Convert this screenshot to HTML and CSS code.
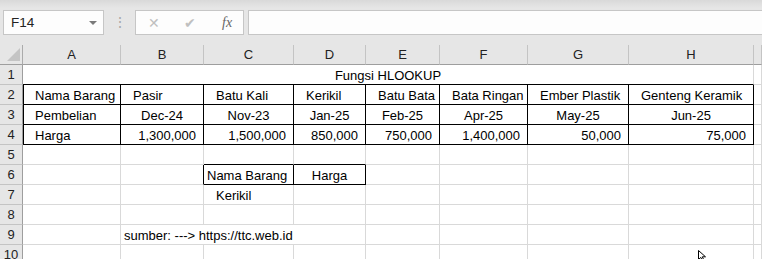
FILE: index.html
```html
<!DOCTYPE html>
<html>
<head>
  <title>Fungsi HLOOKUP</title>
  <link rel="stylesheet" href="styles.css">
</head>
<body>
  <div class="bar">
    <div class="namebox">
      <span>F14</span>
      <span class="drop"></span>
    </div>
    <div class="dots">&#8942;</div>
    <div class="fbtns">
      <span class="fb x">&#10005;</span>
      <span class="fb ok">&#10004;</span>
      <span class="fb fx">fx</span>
    </div>
    <div class="finput"></div>
  </div>

  <div class="sheet">
    <!-- column headers -->
    <div class="corner"><span class="tri"></span></div>
    <div class="colh">A</div>
    <div class="colh">B</div>
    <div class="colh">C</div>
    <div class="colh">D</div>
    <div class="colh">E</div>
    <div class="colh">F</div>
    <div class="colh">G</div>
    <div class="colh">H</div>
    <div class="colh"></div>

    <!-- row 1 -->
    <div class="rowh">1</div>
    <div class="cell merged kb center">Fungsi HLOOKUP</div>
    <div class="cell"></div>

    <!-- row 2 -->
    <div class="rowh">2</div>
    <div class="cell kr kb kl ind">Nama Barang</div>
    <div class="cell kr kb ind">Pasir</div>
    <div class="cell kr kb ind">Batu Kali</div>
    <div class="cell kr kb ind">Kerikil</div>
    <div class="cell kr kb ind">Batu Bata</div>
    <div class="cell kr kb ind">Bata Ringan</div>
    <div class="cell kr kb ind">Ember Plastik</div>
    <div class="cell kr kb ind">Genteng Keramik</div>
    <div class="cell"></div>

    <!-- row 3 -->
    <div class="rowh">3</div>
    <div class="cell kr kb kl ind">Pembelian</div>
    <div class="cell kr kb center">Dec-24</div>
    <div class="cell kr kb center">Nov-23</div>
    <div class="cell kr kb center">Jan-25</div>
    <div class="cell kr kb center">Feb-25</div>
    <div class="cell kr kb center">Apr-25</div>
    <div class="cell kr kb center">May-25</div>
    <div class="cell kr kb center">Jun-25</div>
    <div class="cell"></div>

    <!-- row 4 -->
    <div class="rowh">4</div>
    <div class="cell kr kb kl ind">Harga</div>
    <div class="cell kr kb num">1,300,000</div>
    <div class="cell kr kb num">1,500,000</div>
    <div class="cell kr kb num">850,000</div>
    <div class="cell kr kb num">750,000</div>
    <div class="cell kr kb num">1,400,000</div>
    <div class="cell kr kb num">50,000</div>
    <div class="cell kr kb num">75,000</div>
    <div class="cell"></div>

    <!-- row 5 -->
    <div class="rowh">5</div>
    <div class="cell"></div>
    <div class="cell"></div>
    <div class="cell kb"></div>
    <div class="cell kb"></div>
    <div class="cell"></div>
    <div class="cell"></div>
    <div class="cell"></div>
    <div class="cell"></div>
    <div class="cell"></div>

    <!-- row 6 -->
    <div class="rowh">6</div>
    <div class="cell"></div>
    <div class="cell kr"></div>
    <div class="cell kr kb small">Nama Barang</div>
    <div class="cell kr kb center">Harga</div>
    <div class="cell"></div>
    <div class="cell"></div>
    <div class="cell"></div>
    <div class="cell"></div>
    <div class="cell"></div>

    <!-- row 7 -->
    <div class="rowh">7</div>
    <div class="cell"></div>
    <div class="cell"></div>
    <div class="cell ind">Kerikil</div>
    <div class="cell"></div>
    <div class="cell"></div>
    <div class="cell"></div>
    <div class="cell"></div>
    <div class="cell"></div>
    <div class="cell"></div>

    <!-- row 8 -->
    <div class="rowh">8</div>
    <div class="cell"></div>
    <div class="cell"></div>
    <div class="cell"></div>
    <div class="cell"></div>
    <div class="cell"></div>
    <div class="cell"></div>
    <div class="cell"></div>
    <div class="cell"></div>
    <div class="cell"></div>

    <!-- row 9 -->
    <div class="rowh">9</div>
    <div class="cell"></div>
    <div class="cell span3 small">sumber: ---&gt; https://ttc.web.id</div>
    <div class="cell"></div>
    <div class="cell"></div>
    <div class="cell"></div>
    <div class="cell"></div>
    <div class="cell"></div>

    <!-- row 10 -->
    <div class="rowh">10</div>
    <div class="cell"></div>
    <div class="cell"></div>
    <div class="cell"></div>
    <div class="cell"></div>
    <div class="cell"></div>
    <div class="cell"></div>
    <div class="cell"></div>
    <div class="cell"></div>
    <div class="cell"></div>
  </div>

  <svg class="pointer" width="10" height="12" viewBox="0 0 10 12">
    <path d="M0.5 0.5 L0.5 9.5 L2.8 7.4 L4.6 11 L6 10.3 L4.3 6.8 L7.5 6.8 Z" fill="#fff" stroke="#000" stroke-width="1"/>
  </svg>
</body>
</html>
```

FILE: styles.css
```css
/* formula bar + sheet grid */
body {
  margin: 0;
  background-color: #ffffff;
  font-family: "Liberation Sans", Arial, sans-serif;
  overflow: hidden;
  position: relative;
  height: 259px;
}

.bar {
  height: 45px;
  box-sizing: border-box;
  padding: 10px 0 0 3px;
  display: flex;
  align-items: flex-start;
  background: linear-gradient(#d9d9d9 0px, #e6e6e6 8px, #e6e6e6 100%);
}

.namebox {
  width: 101px;
  height: 25px;
  box-sizing: border-box;
  border: 1px solid #c6c6c6;
  background-color: #fdfdfd;
  display: flex;
  align-items: center;
  justify-content: space-between;
  padding: 0 6px 0 7px;
  font-size: 13.5px;
  color: #222;
}

.drop {
  width: 0;
  height: 0;
  border-left: 4px solid transparent;
  border-right: 4px solid transparent;
  border-top: 4px solid #7a7a7a;
}

.dots {
  width: 31px;
  height: 25px;
  line-height: 25px;
  text-align: center;
  color: #a8a8a8;
  font-size: 14px;
}

.fbtns {
  width: 109px;
  height: 25px;
  box-sizing: border-box;
  border: 1px solid #c6c6c6;
  background-color: #fdfdfd;
  display: flex;
  align-items: center;
  padding-left: 12px;
}

.fb {
  color: #c0c0c0;
  font-size: 14px;
}

.x {
  width: 36px;
}

.ok {
  width: 38px;
}

.fx {
  font-family: "Liberation Serif", serif;
  font-style: italic;
  color: #666;
  font-size: 14px;
}

.finput {
  flex: 1;
  height: 25px;
  margin-left: 4px;
  box-sizing: border-box;
  border: 1px solid #c6c6c6;
  border-right: none;
  background-color: #fdfdfd;
}

.sheet {
  display: grid;
  grid-template-columns: 23px 98px 83px 90px 72px 74px 88px 101px 125px 8px;
  grid-auto-rows: 20px;
  font-size: 13px;
}

.corner {
  background-color: #e6e6e6;
  border-right: 1px solid #ababab;
  border-bottom: 1px solid #9e9e9e;
  position: relative;
}

.tri {
  position: absolute;
  right: 2px;
  bottom: 3px;
  width: 0;
  height: 0;
  border-left: 13px solid transparent;
  border-bottom: 13px solid #c4c4c4;
}

.colh {
  background-color: #e6e6e6;
  border-right: 1px solid #c4c4c4;
  border-bottom: 1px solid #9e9e9e;
  text-align: center;
  line-height: 20px;
  color: #222;
  font-size: 13px;
}

.rowh {
  background-color: #e6e6e6;
  border-right: 1px solid #9e9e9e;
  border-bottom: 1px solid #c4c4c4;
  text-align: center;
  line-height: 20px;
  color: #222;
  font-size: 13px;
}

.cell {
  border-right: 1px solid #d9d9d9;
  border-bottom: 1px solid #d9d9d9;
  display: flex;
  align-items: flex-end;
  line-height: 16px;
  white-space: nowrap;
  color: #000;
  min-width: 0;
}

.kr {
  border-right-color: #000;
}

.kb {
  border-bottom-color: #000;
}

.kl {
  box-shadow: inset 1px 0 0 #000;
}

.merged {
  grid-column: span 8;
}

.span3 {
  grid-column: span 3;
}

.center {
  justify-content: center;
}

.ind {
  padding-left: 12px;
}

.small {
  padding-left: 3px;
}

.num {
  justify-content: flex-end;
  padding-right: 7px;
}

.pointer {
  position: absolute;
  left: 698px;
  top: 250px;
}
```
